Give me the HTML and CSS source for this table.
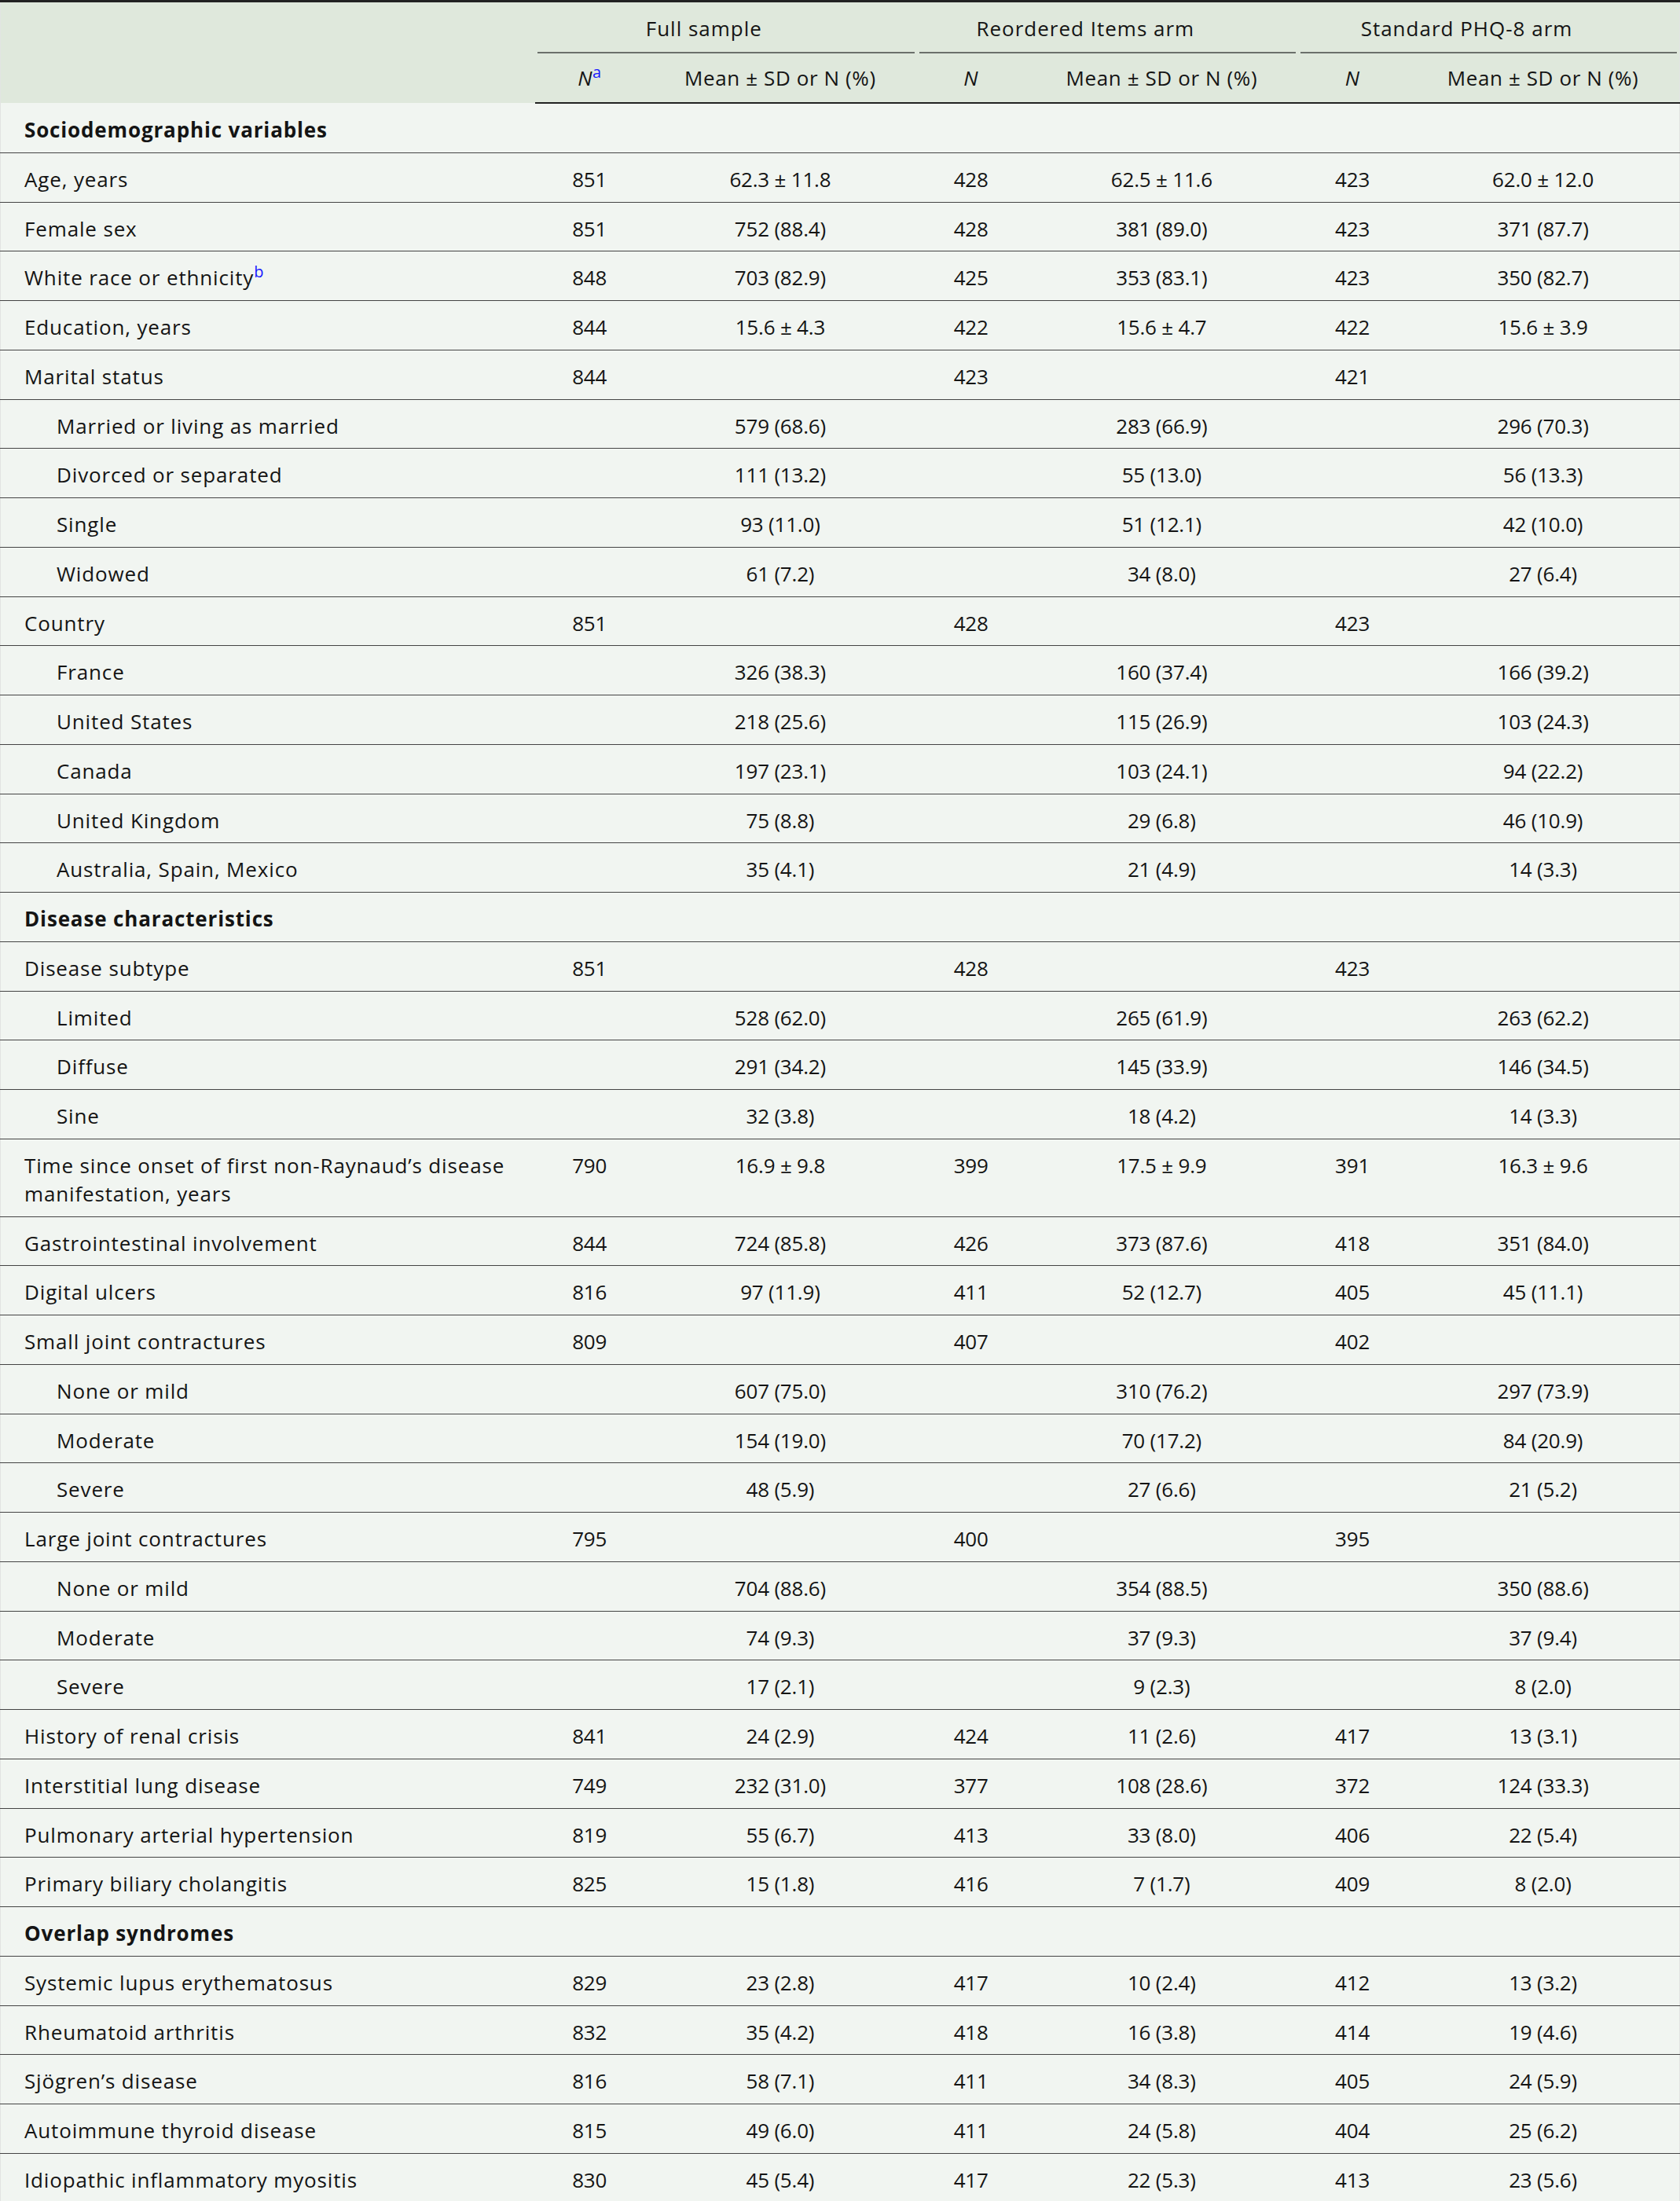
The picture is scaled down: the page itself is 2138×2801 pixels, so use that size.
FILE: index.html
```html
<!DOCTYPE html>
<html lang="en">
<head>
<meta charset="utf-8">
<title>Table</title>
<link rel="stylesheet" href="styles.css">
</head>
<body>
<table class="tbl">
<colgroup>
<col class="c-label"><col class="c-n"><col class="c-m"><col class="c-n"><col class="c-m"><col class="c-n"><col class="c-m">
</colgroup>
<thead>
<tr class="h1">
<th rowspan="2" class="blank"></th>
<th colspan="2" class="grp"><div class="grp-in">Full sample</div></th>
<th colspan="2" class="grp"><div class="grp-in">Reordered Items arm</div></th>
<th colspan="2" class="grp"><div class="grp-in">Standard PHQ-8 arm</div></th>
</tr>
<tr class="h2">
<th class="num"><i>N</i><sup class="fn">a</sup></th><th>Mean ± SD or N (%)</th>
<th class="num"><i>N</i></th><th>Mean ± SD or N (%)</th>
<th class="num"><i>N</i></th><th>Mean ± SD or N (%)</th>
</tr>
</thead>
<tbody>
<tr class="sec"><td colspan="7">Sociodemographic variables</td></tr>
<tr><td>Age, years</td><td>851</td><td>62.3 ± 11.8</td><td>428</td><td>62.5 ± 11.6</td><td>423</td><td>62.0 ± 12.0</td></tr>
<tr><td>Female sex</td><td>851</td><td>752 (88.4)</td><td>428</td><td>381 (89.0)</td><td>423</td><td>371 (87.7)</td></tr>
<tr><td>White race or ethnicity<sup class="fn">b</sup></td><td>848</td><td>703 (82.9)</td><td>425</td><td>353 (83.1)</td><td>423</td><td>350 (82.7)</td></tr>
<tr><td>Education, years</td><td>844</td><td>15.6 ± 4.3</td><td>422</td><td>15.6 ± 4.7</td><td>422</td><td>15.6 ± 3.9</td></tr>
<tr><td>Marital status</td><td>844</td><td></td><td>423</td><td></td><td>421</td><td></td></tr>
<tr class="sub"><td>Married or living as married</td><td></td><td>579 (68.6)</td><td></td><td>283 (66.9)</td><td></td><td>296 (70.3)</td></tr>
<tr class="sub"><td>Divorced or separated</td><td></td><td>111 (13.2)</td><td></td><td>55 (13.0)</td><td></td><td>56 (13.3)</td></tr>
<tr class="sub"><td>Single</td><td></td><td>93 (11.0)</td><td></td><td>51 (12.1)</td><td></td><td>42 (10.0)</td></tr>
<tr class="sub"><td>Widowed</td><td></td><td>61 (7.2)</td><td></td><td>34 (8.0)</td><td></td><td>27 (6.4)</td></tr>
<tr><td>Country</td><td>851</td><td></td><td>428</td><td></td><td>423</td><td></td></tr>
<tr class="sub"><td>France</td><td></td><td>326 (38.3)</td><td></td><td>160 (37.4)</td><td></td><td>166 (39.2)</td></tr>
<tr class="sub"><td>United States</td><td></td><td>218 (25.6)</td><td></td><td>115 (26.9)</td><td></td><td>103 (24.3)</td></tr>
<tr class="sub"><td>Canada</td><td></td><td>197 (23.1)</td><td></td><td>103 (24.1)</td><td></td><td>94 (22.2)</td></tr>
<tr class="sub"><td>United Kingdom</td><td></td><td>75 (8.8)</td><td></td><td>29 (6.8)</td><td></td><td>46 (10.9)</td></tr>
<tr class="sub"><td>Australia, Spain, Mexico</td><td></td><td>35 (4.1)</td><td></td><td>21 (4.9)</td><td></td><td>14 (3.3)</td></tr>
<tr class="sec"><td colspan="7">Disease characteristics</td></tr>
<tr><td>Disease subtype</td><td>851</td><td></td><td>428</td><td></td><td>423</td><td></td></tr>
<tr class="sub"><td>Limited</td><td></td><td>528 (62.0)</td><td></td><td>265 (61.9)</td><td></td><td>263 (62.2)</td></tr>
<tr class="sub"><td>Diffuse</td><td></td><td>291 (34.2)</td><td></td><td>145 (33.9)</td><td></td><td>146 (34.5)</td></tr>
<tr class="sub"><td>Sine</td><td></td><td>32 (3.8)</td><td></td><td>18 (4.2)</td><td></td><td>14 (3.3)</td></tr>
<tr><td class="nw">Time since onset of first non-Raynaud’s disease<br>manifestation, years</td><td>790</td><td>16.9 ± 9.8</td><td>399</td><td>17.5 ± 9.9</td><td>391</td><td>16.3 ± 9.6</td></tr>
<tr><td>Gastrointestinal involvement</td><td>844</td><td>724 (85.8)</td><td>426</td><td>373 (87.6)</td><td>418</td><td>351 (84.0)</td></tr>
<tr><td>Digital ulcers</td><td>816</td><td>97 (11.9)</td><td>411</td><td>52 (12.7)</td><td>405</td><td>45 (11.1)</td></tr>
<tr><td>Small joint contractures</td><td>809</td><td></td><td>407</td><td></td><td>402</td><td></td></tr>
<tr class="sub"><td>None or mild</td><td></td><td>607 (75.0)</td><td></td><td>310 (76.2)</td><td></td><td>297 (73.9)</td></tr>
<tr class="sub"><td>Moderate</td><td></td><td>154 (19.0)</td><td></td><td>70 (17.2)</td><td></td><td>84 (20.9)</td></tr>
<tr class="sub"><td>Severe</td><td></td><td>48 (5.9)</td><td></td><td>27 (6.6)</td><td></td><td>21 (5.2)</td></tr>
<tr><td>Large joint contractures</td><td>795</td><td></td><td>400</td><td></td><td>395</td><td></td></tr>
<tr class="sub"><td>None or mild</td><td></td><td>704 (88.6)</td><td></td><td>354 (88.5)</td><td></td><td>350 (88.6)</td></tr>
<tr class="sub"><td>Moderate</td><td></td><td>74 (9.3)</td><td></td><td>37 (9.3)</td><td></td><td>37 (9.4)</td></tr>
<tr class="sub"><td>Severe</td><td></td><td>17 (2.1)</td><td></td><td>9 (2.3)</td><td></td><td>8 (2.0)</td></tr>
<tr><td>History of renal crisis</td><td>841</td><td>24 (2.9)</td><td>424</td><td>11 (2.6)</td><td>417</td><td>13 (3.1)</td></tr>
<tr><td>Interstitial lung disease</td><td>749</td><td>232 (31.0)</td><td>377</td><td>108 (28.6)</td><td>372</td><td>124 (33.3)</td></tr>
<tr><td>Pulmonary arterial hypertension</td><td>819</td><td>55 (6.7)</td><td>413</td><td>33 (8.0)</td><td>406</td><td>22 (5.4)</td></tr>
<tr><td>Primary biliary cholangitis</td><td>825</td><td>15 (1.8)</td><td>416</td><td>7 (1.7)</td><td>409</td><td>8 (2.0)</td></tr>
<tr class="sec"><td colspan="7">Overlap syndromes</td></tr>
<tr><td>Systemic lupus erythematosus</td><td>829</td><td>23 (2.8)</td><td>417</td><td>10 (2.4)</td><td>412</td><td>13 (3.2)</td></tr>
<tr><td>Rheumatoid arthritis</td><td>832</td><td>35 (4.2)</td><td>418</td><td>16 (3.8)</td><td>414</td><td>19 (4.6)</td></tr>
<tr><td>Sjögren’s disease</td><td>816</td><td>58 (7.1)</td><td>411</td><td>34 (8.3)</td><td>405</td><td>24 (5.9)</td></tr>
<tr><td>Autoimmune thyroid disease</td><td>815</td><td>49 (6.0)</td><td>411</td><td>24 (5.8)</td><td>404</td><td>25 (6.2)</td></tr>
<tr class="last"><td>Idiopathic inflammatory myositis</td><td>830</td><td>45 (5.4)</td><td>417</td><td>22 (5.3)</td><td>413</td><td>23 (5.6)</td></tr>
</tbody>
</table>
</body>
</html>
```
FILE: styles.css
```css
html, body {
  margin: 0;
  padding: 0;
  background: #ffffff;
}
body {
  font-family: "Open Sans", Lato, sans-serif;
  font-size: 26px;
  color: #141414;
}
.tbl {
  width: 2138px;
  table-layout: fixed;
  border-collapse: collapse;
  border-top: 3px solid #222;
  border-left: 1px solid #e2e4e2;
  border-right: 1px solid #e2e4e2;
  background: #f1f5f1;
}
.c-label { width: 680px; }
.c-n { width: 138px; }
.c-m { width: 347px; }

thead { background: #dfe8dc; }
th {
  font-weight: 400;
  text-align: center;
  line-height: 36px;
  padding: 0;
  letter-spacing: 0.6px;
}
.grp { padding: 0 3px; }
.grp-in {
  padding: 15px 56px 12px 0;
  border-bottom: 2px solid #6b706b;
  letter-spacing: 1px;
}
.h2 th {
  padding: 13px 0 13px;
  border-bottom: 2px solid #222;
}
.h2 th i { font-style: italic; }
.fn {
  color: #1a1aff;
  font-size: 20px;
  line-height: 0;
  vertical-align: 10px;
  letter-spacing: 0;
}
td {
  line-height: 36px;
  padding: 15px 0 10.75px;
  border-bottom: 1px solid #444;
  text-align: center;
  vertical-align: top;
  letter-spacing: -0.2px;
}
td:first-child {
  text-align: left;
  padding-left: 30px;
  padding-right: 4px;
  letter-spacing: 0.85px;
}
td.nw { white-space: nowrap; }
.sub td:first-child { padding-left: 71px; }
.sec td { font-weight: 700; }
.last td { border-bottom: 3px solid #222; }
```
